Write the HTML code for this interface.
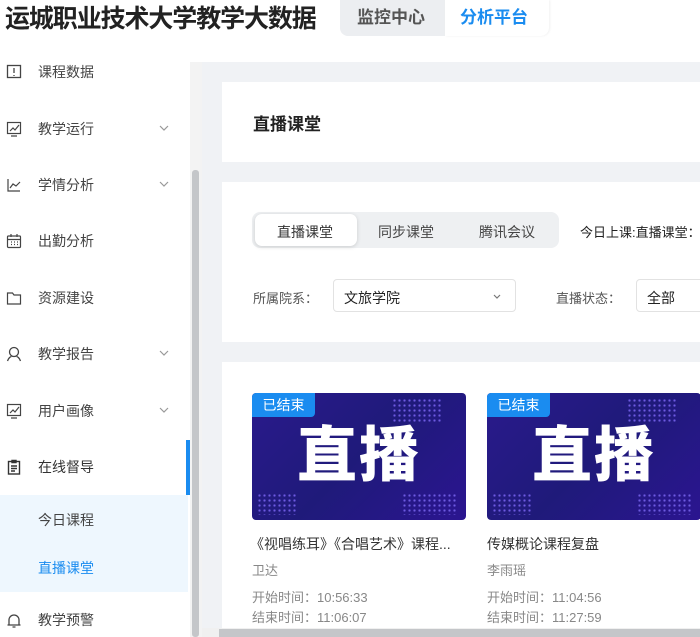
<!DOCTYPE html><html><head><meta charset="utf-8"><style>
*{margin:0;padding:0;box-sizing:border-box}
body{width:700px;height:637px;overflow:hidden;background:#fff;font-family:"Liberation Sans","Noto Sans CJK SC",sans-serif;position:relative;color:#333}
.a{position:absolute}
.title{left:5px;top:2px;font-size:25px;font-weight:bold;color:#222;letter-spacing:-1.1px;line-height:34px}
.tabs{left:340px;top:0;width:209px;height:36px;background:#eceef1;border-radius:0 0 8px 8px}
.tabs span{position:absolute;top:0;line-height:36px;font-size:17px;font-weight:bold}
.side{left:0;top:62px;width:190px;height:575px;background:#fff}
.item{position:absolute;left:0;width:190px;height:30px;line-height:30px;font-size:14px;color:#444}
.item .ic{position:absolute;left:6px;top:7px;width:16px;height:16px}
.item .t{position:absolute;left:38px}
.item .ch{position:absolute;left:158px;top:8px}
.main{left:202px;top:62px;width:498px;height:575px;background:#f0f2f5}
.card{position:absolute;background:#fff;left:20px;width:478px}
.vid{position:absolute;width:214px;height:127px;border-radius:4px;background:linear-gradient(135deg,#2a1a8c,#1f1a7a 50%,#2b1590);overflow:hidden}
.vid .tag{position:absolute;left:0;top:0;width:63px;height:24px;background:#1a8cf0;color:#fff;font-size:14px;line-height:24px;text-align:center;border-radius:4px 0 4px 0}
.vid .big{position:absolute;left:0;right:0;top:25px;text-align:center;color:#fff;font-size:60px;font-weight:900;letter-spacing:2px;line-height:76px}
.dots{position:absolute;background-image:radial-gradient(circle,#6d5ae0 1px,transparent 1.3px);background-size:5px 5px}
.vt{position:absolute;font-size:14px;color:#333;white-space:nowrap}
.vs{position:absolute;font-size:13px;color:#888;white-space:nowrap}
</style></head><body>
<div class="a title">运城职业技术大学教学大数据</div>
<div class="a tabs"><span style="left:17px;color:#555">监控中心</span><div class="a" style="left:105px;top:0;width:104px;height:36px;background:#fff;border-radius:0 0 8px 0;box-shadow:1px 0 2px rgba(0,0,0,.06)"></div><span style="left:120px;color:#1a8cf0">分析平台</span></div>

<div class="a side">
<div class="item" style="top:-5px"><svg class="ic" viewBox="0 0 16 16" fill="none" stroke="#444" stroke-width="1.3"><rect x="1.5" y="1.5" width="13" height="12"/><path d="M8 4v5M8 11v1"/></svg><span class="t">课程数据</span></div>
<div class="item" style="top:52px"><svg class="ic" viewBox="0 0 16 16" fill="none" stroke="#444" stroke-width="1.2"><rect x="1.5" y="1.5" width="13" height="11"/><path d="M4 10l3-3 2 2 4-5M5 15h6"/></svg><span class="t">教学运行</span><svg class="ch" width="12" height="12" viewBox="0 0 12 12"><path d="M2 4l4 4 4-4" fill="none" stroke="#999" stroke-width="1.2"/></svg></div>
<div class="item" style="top:108px"><svg class="ic" viewBox="0 0 16 16" fill="none" stroke="#444" stroke-width="1.2"><path d="M2 2v12h12M4 11l3-4 3 2 4-4"/></svg><span class="t">学情分析</span><svg class="ch" width="12" height="12" viewBox="0 0 12 12"><path d="M2 4l4 4 4-4" fill="none" stroke="#999" stroke-width="1.2"/></svg></div>
<div class="item" style="top:164px"><svg class="ic" viewBox="0 0 16 16" fill="none" stroke="#444" stroke-width="1.2"><rect x="1.5" y="3" width="13" height="11.5" rx="1"/><path d="M1.5 6.5h13M5 1v3M11 1v3M5 9h1M8 9h1M11 9h1M5 11.5h1M8 11.5h1M11 11.5h1"/></svg><span class="t">出勤分析</span></div>
<div class="item" style="top:221px"><svg class="ic" viewBox="0 0 16 16" fill="none" stroke="#444" stroke-width="1.2"><path d="M1.5 3h5l1.5 2h6.5v9h-13z"/></svg><span class="t">资源建设</span></div>
<div class="item" style="top:277px"><svg class="ic" viewBox="0 0 16 16" fill="none" stroke="#444" stroke-width="1.3"><circle cx="8" cy="6" r="4.5"/><path d="M1.5 15c1-3 3-4.5 4-4.5M14.5 15c-1-3-3-4.5-4-4.5"/></svg><span class="t">教学报告</span><svg class="ch" width="12" height="12" viewBox="0 0 12 12"><path d="M2 4l4 4 4-4" fill="none" stroke="#999" stroke-width="1.2"/></svg></div>
<div class="item" style="top:334px"><svg class="ic" viewBox="0 0 16 16" fill="none" stroke="#444" stroke-width="1.2"><rect x="1.5" y="1.5" width="13" height="11"/><path d="M4 10l3-3 2 2 4-5M5 15h6"/></svg><span class="t">用户画像</span><svg class="ch" width="12" height="12" viewBox="0 0 12 12"><path d="M2 4l4 4 4-4" fill="none" stroke="#999" stroke-width="1.2"/></svg></div>
<div class="item" style="top:390px"><svg class="ic" viewBox="0 0 16 16" fill="none" stroke="#333" stroke-width="1.4"><rect x="2.5" y="2.5" width="11" height="12.5"/><path d="M6 1.5h4v2H6zM5 7h6M5 9.5h6M5 12h4"/></svg><span class="t" style="color:#333">在线督导</span></div>
<div class="a" style="left:0;top:433px;width:188px;height:97px;background:#eef7fe"></div>
<div class="item" style="top:443px"><span class="t">今日课程</span></div>
<div class="item" style="top:491px"><span class="t" style="color:#1a8cf0">直播课堂</span></div>
<div class="item" style="top:543px"><svg class="ic" viewBox="0 0 16 16" fill="none" stroke="#444" stroke-width="1.3"><path d="M3 13V8a5 5 0 0110 0v5zM1.5 13h13M6.5 15h3"/></svg><span class="t">教学预警</span></div>
</div>
<div class="a" style="left:186px;top:440px;width:4px;height:55px;background:#1a8cf0"></div>
<div class="a" style="left:190px;top:62px;width:12px;height:575px;background:#f3f3f3"></div>
<div class="a" style="left:192px;top:170px;width:7px;height:467px;background:#c4c6c9;border-radius:3px"></div>

<div class="a main">
<div class="card" style="top:20px;height:80px"><div class="a" style="left:31px;top:28px;font-size:17px;font-weight:bold;color:#222">直播课堂</div></div>
<div class="card" style="top:120px;height:160px">
<div class="a" style="left:30px;top:30px;width:307px;height:36px;background:#eef0f2;border-radius:8px"></div>
<div class="a" style="left:33px;top:32px;width:102px;height:32px;background:#fff;border-radius:7px;box-shadow:0 1px 4px rgba(0,0,0,.15)"></div>
<div class="a" style="left:55px;top:40px;font-size:14px">直播课堂</div>
<div class="a" style="left:156px;top:40px;font-size:14px;color:#444">同步课堂</div>
<div class="a" style="left:257px;top:40px;font-size:14px;color:#444">腾讯会议</div>
<div class="a" style="left:358px;top:40px;font-size:13px;color:#222;white-space:nowrap">今日上课:直播课堂：</div>
<div class="a" style="left:31px;top:106px;font-size:13px;color:#555">所属院系：</div>
<div class="a" style="left:111px;top:97px;width:183px;height:33px;border:1px solid #e2e2e2;border-radius:4px"><span class="a" style="left:10px;top:8px;font-size:14px;color:#222">文旅学院</span><svg class="a" style="left:157px;top:10px" width="12" height="12" viewBox="0 0 12 12"><path d="M3 5l3 3 3-3" fill="none" stroke="#777" stroke-width="1.2"/></svg></div>
<div class="a" style="left:334px;top:106px;font-size:13px;color:#555;white-space:nowrap">直播状态：</div>
<div class="a" style="left:414px;top:97px;width:80px;height:33px;border:1px solid #e2e2e2;border-radius:4px"><span class="a" style="left:10px;top:8px;font-size:14px;color:#222">全部</span></div>
</div>
<div class="card" style="top:300px;height:275px">
<div class="vid" style="left:30px;top:31px"><div class="dots" style="left:140px;top:5px;width:50px;height:25px"></div><div class="dots" style="left:5px;top:100px;width:40px;height:22px"></div><div class="dots" style="left:150px;top:100px;width:55px;height:22px"></div><div class="big">直播</div><div class="tag">已结束</div></div>
<div class="vid" style="left:265px;top:31px"><div class="dots" style="left:140px;top:5px;width:50px;height:25px"></div><div class="dots" style="left:5px;top:100px;width:40px;height:22px"></div><div class="dots" style="left:150px;top:100px;width:55px;height:22px"></div><div class="big">直播</div><div class="tag">已结束</div></div>
<div class="vt" style="left:28px;top:172px">《视唱练耳》《合唱艺术》课程...</div>
<div class="vt" style="left:265px;top:172px">传媒概论课程复盘</div>
<div class="vs" style="left:30px;top:198px">卫达</div>
<div class="vs" style="left:265px;top:198px">李雨瑶</div>
<div class="vs" style="left:30px;top:225px">开始时间：10:56:33</div>
<div class="vs" style="left:265px;top:225px">开始时间：11:04:56</div>
<div class="vs" style="left:30px;top:245px">结束时间：11:06:07</div>
<div class="vs" style="left:265px;top:245px">结束时间：11:27:59</div>
</div>
</div>
<div class="a" style="left:202px;top:628px;width:498px;height:9px;background:#f0f0f0"></div>
<div class="a" style="left:219px;top:629px;width:481px;height:8px;background:#c4c6c9"></div>
</body></html>
